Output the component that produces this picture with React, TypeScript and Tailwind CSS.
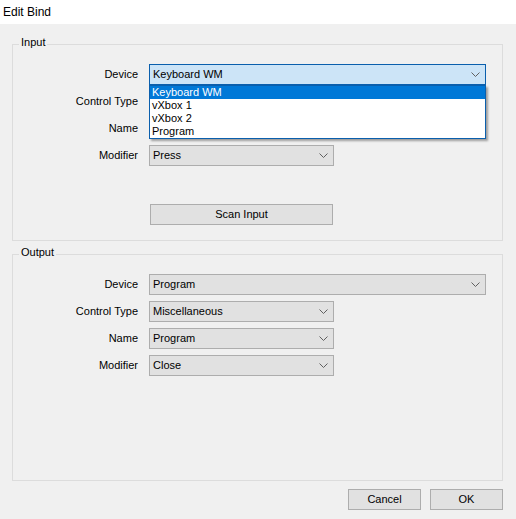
import { type ReactElement, type ReactNode } from 'react';

/**
 * Small Windows-style dropdown chevron
 */
const Chevron = (): ReactElement => (
  <svg width="9" height="5" viewBox="0 0 9 5" className="shrink-0">
    <path d="M0.5 0.5 L4.5 4.5 L8.5 0.5" fill="none" stroke="#606060" strokeWidth="1" />
  </svg>
);

interface ComboProps {
  value?: string;
  wide?: boolean;
  focused?: boolean;
}

const Combo = ({ value = '', wide, focused }: ComboProps): ReactElement => (
  <div
    className={`h-[21px] flex items-center justify-between pl-[3px] pr-[5px] border ${
      wide ? 'w-[337px]' : 'w-[185px]'
    } ${focused ? 'bg-[#cce4f7] border-[#0a5fad]' : 'bg-[#e1e1e1] border-[#adadad]'}`}
  >
    <span className="leading-none">{value}</span>
    <Chevron />
  </div>
);

interface RowProps {
  label: string;
  children: ReactNode;
}

const Row = ({ label, children }: RowProps): ReactElement => (
  <div className="flex items-center h-[21px]">
    <span className="w-[125px] text-right leading-none">{label}</span>
    <div className="ml-[11px] relative">{children}</div>
  </div>
);

interface GroupProps {
  title: string;
  className: string;
  children: ReactNode;
}

const Group = ({ title, className, children }: GroupProps): ReactElement => (
  <div className={`relative border border-[#dcdcdc] ${className}`}>
    <span className="absolute -top-[8px] left-[6px] px-[2px] bg-[#f0f0f0] leading-none">{title}</span>
    {children}
  </div>
);

const DeviceList = (): ReactElement => {
  const items = ['Keyboard WM', 'vXbox 1', 'vXbox 2', 'Program'];
  return (
    <div className="absolute top-[21px] left-0 w-[337px] bg-white border border-[#0a5fad] shadow-[2px_2px_2px_rgba(0,0,0,0.35)] z-10">
      {items.map((item, i) => (
        <div
          key={item}
          className={`h-[13px] flex items-center pl-[2px] leading-none ${
            i === 0 ? 'bg-[#0078d7] text-white' : 'text-black'
          }`}
        >
          {item}
        </div>
      ))}
    </div>
  );
};

const Button = ({ label, className = '' }: { label: string; className?: string }): ReactElement => (
  <div
    className={`h-[21px] flex items-center justify-center bg-[#e1e1e1] border border-[#adadad] leading-none ${className}`}
  >
    {label}
  </div>
);

export default function App(): ReactElement {
  return (
    <div
      className="w-[516px] h-[519px] bg-[#f0f0f0] text-black text-[11px] flex flex-col"
      style={{ fontFamily: '"Liberation Sans", Arial, sans-serif' }}
    >
      <div className="h-[24px] bg-white flex items-center pl-[3px] text-[12px]">Edit Bind</div>

      <div className="pt-[20px] pl-[12px] pr-[13px] flex flex-col">
        <Group title="Input" className="h-[197px] pt-[19px]">
          <div className="flex flex-col gap-[6px]">
            <Row label="Device">
              <Combo value="Keyboard WM" wide focused />
              <DeviceList />
            </Row>
            <Row label="Control Type">
              <Combo />
            </Row>
            <Row label="Name">
              <Combo />
            </Row>
            <Row label="Modifier">
              <Combo value="Press" />
            </Row>
          </div>
          <Button label="Scan Input" className="w-[183px] ml-[137px] mt-[38px]" />
        </Group>

        <Group title="Output" className="h-[227px] mt-[13px] pt-[19px]">
          <div className="flex flex-col gap-[6px]">
            <Row label="Device">
              <Combo value="Program" wide />
            </Row>
            <Row label="Control Type">
              <Combo value="Miscellaneous" />
            </Row>
            <Row label="Name">
              <Combo value="Program" />
            </Row>
            <Row label="Modifier">
              <Combo value="Close" />
            </Row>
          </div>
        </Group>

        <div className="flex justify-end gap-[9px] mt-[8px]">
          <Button label="Cancel" className="w-[73px]" />
          <Button label="OK" className="w-[73px]" />
        </div>
      </div>
    </div>
  );
}
